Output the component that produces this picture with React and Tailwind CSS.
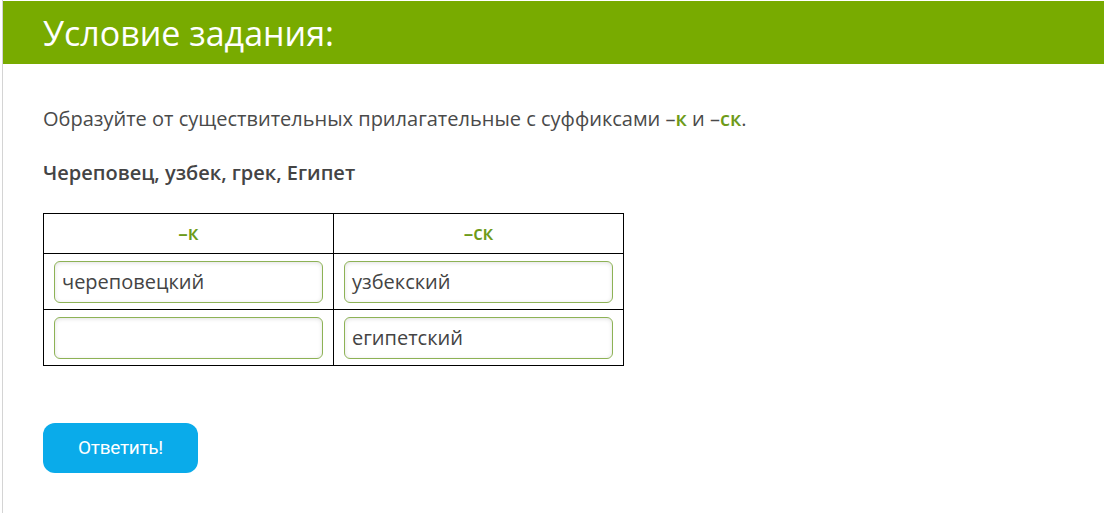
import React from 'react'

const Answer = ({ value }) => (
    <div className="h-[42px] rounded-[6px] border border-[#8db255] bg-white shadow-[inset_0_1px_4px_rgba(0,0,0,0.12)] flex items-center px-[7px] text-[20px] text-[#444]">
        {value}
    </div>
)

export default function App() {
    const rows = [
        ['череповецкий', 'узбекский'],
        ['', 'египетский'],
    ]

    return (
        <div className="w-[1104px] h-[513px] bg-white border-l border-[#d4d4d4] ml-[2px] pt-px font-['Open_Sans',sans-serif] text-[#4a4a4a] overflow-hidden">
            {/* Header */}
            <div className="h-[63px] bg-[#78ab00] flex items-center pl-[40px]">
                <h1 className="text-[34px] text-white leading-none">Условие задания:</h1>
            </div>

            <div className="pl-[40px] pt-[41px]">
                <p className="text-[20px] leading-[28px]">
                    Образуйте от существительных прилагательные с суффиксами –<b className="text-[#6e9b1a] font-semibold">к</b> и –<b className="text-[#6e9b1a] font-semibold">ск</b>.
                </p>
                <p className="mt-[26px] text-[20px] leading-[28px] font-semibold text-[#444]">
                    Череповец, узбек, грек, Египет
                </p>

                {/* Table */}
                <table className="mt-[26px] border-collapse w-[581px]">
                    <thead>
                        <tr className="h-[40px]">
                            <th className="border border-black text-[19px] font-semibold text-[#6e9b1a] w-[290px]">–к</th>
                            <th className="border border-black text-[19px] font-semibold text-[#6e9b1a]">–ск</th>
                        </tr>
                    </thead>
                    <tbody>
                        {rows.map((r, i) => (
                            <tr key={i} className="h-[56px]">
                                {r.map((v, j) => (
                                    <td key={j} className="border border-black px-[10px]">
                                        <Answer value={v} />
                                    </td>
                                ))}
                            </tr>
                        ))}
                    </tbody>
                </table>

                <button className="mt-[57px] w-[155px] h-[50px] rounded-[12px] bg-[#0aabea] text-white text-[19px] font-['Roboto',sans-serif] tracking-[-0.3px]">
                    Ответить!
                </button>
            </div>
        </div>
    )
}
